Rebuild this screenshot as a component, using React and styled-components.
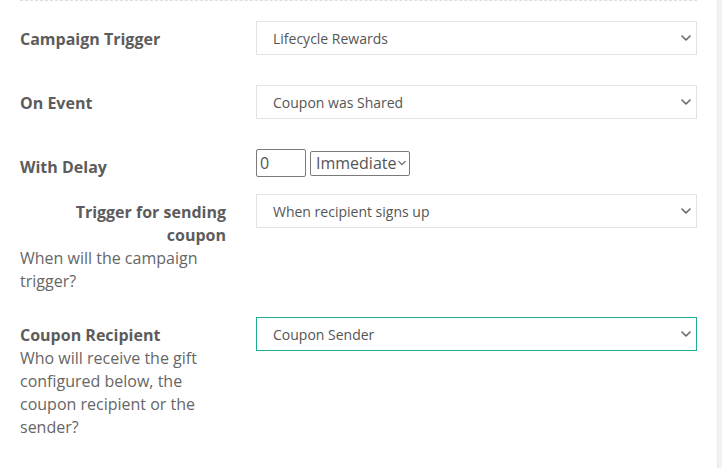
import React from "react";
import styled, { createGlobalStyle } from "styled-components";

const GlobalStyle = createGlobalStyle`
  html, body { margin: 0; padding: 0; background: #fff; }
  body { font-family: "Open Sans", "Liberation Sans", sans-serif; }
  * { box-sizing: border-box; }
`;

const Page = styled.div`
  display: flex;
  width: 722px;
  height: 468px;
  overflow: hidden;
`;

const Main = styled.main`
  flex: 1;
  padding: 0 20px;
`;

const SideStrip = styled.div`
  width: 5px;
  background: #f0f2f7;
  border-left: 1px solid #e9ebf1;
`;

const Form = styled.form`
  display: flex;
  flex-direction: column;
  border-top: 1px dashed #dcdcdc;
  padding-top: 20px;
`;

const Row = styled.div`
  display: grid;
  grid-template-columns: 206px 1fr;
  column-gap: 30px;
  align-items: start;
  margin-bottom: ${(p) => p.$mb}px;
`;

const LabelCell = styled.div`
  padding-top: 7px;
  font-size: 16px;
  line-height: 23px;
  color: #666;
`;

const LabelTitle = styled.label`
  display: block;
  font-weight: 700;
  color: #5c5c5c;
  text-align: ${(p) => p.$align || "left"};
`;

const Description = styled.div`
  font-weight: 400;
  color: #666;
`;

const SelectWrap = styled.div`
  position: relative;
  width: ${(p) => p.$width || "100%"};
  height: ${(p) => p.$height || 34}px;
`;

const Select = styled.select`
  appearance: none;
  -webkit-appearance: none;
  width: 100%;
  height: 100%;
  margin: 0;
  border: 1px solid ${(p) => (p.$active ? "#1fae8d" : "#e2e2e2")};
  border-radius: 0;
  background: #fff;
  padding: 0 30px 0 16px;
  font-family: "Open Sans", "Liberation Sans", sans-serif;
  font-size: 14px;
  color: #555;
  outline: none;
`;

const SmallSelect = styled.select`
  appearance: none;
  -webkit-appearance: none;
  width: 100%;
  height: 100%;
  margin: 0;
  border: 1px solid #7a7a7a;
  border-radius: 2px;
  background: #fff;
  padding: 0 11px 0 5px;
  font-family: "Open Sans", "Liberation Sans", sans-serif;
  font-size: 16px;
  color: #555;
  outline: none;
`;

const Chevron = styled.svg`
  position: absolute;
  right: ${(p) => p.$right}px;
  top: 50%;
  transform: translateY(-50%);
  pointer-events: none;
`;

const DelayControls = styled.div`
  display: flex;
  align-items: center;
  gap: 4px;
`;

const DelayInput = styled.input`
  width: 50px;
  height: 28px;
  margin: 0;
  border: 1px solid #7a7a7a;
  border-radius: 2px;
  padding: 0 3px;
  font-family: "Open Sans", "Liberation Sans", sans-serif;
  font-size: 16px;
  color: #555;
  outline: none;
`;

const ChevronIcon = ({ right = 6, w = 10, h = 6 }) => (
  <Chevron $right={right} width={w} height={h} viewBox="0 0 10 6">
    <path d="M1 1 L5 5 L9 1" fill="none" stroke="#666" strokeWidth="1.6" strokeLinecap="round" strokeLinejoin="round" />
  </Chevron>
);

const FieldSelect = ({ value, active }) => (
  <SelectWrap>
    <Select $active={active} defaultValue={value}>
      <option>{value}</option>
    </Select>
    <ChevronIcon />
  </SelectWrap>
);

export default function App() {
  return (
    <>
      <GlobalStyle />
      <Page>
        <Main>
          <Form>
            <Row $mb={30}>
              <LabelCell>
                <LabelTitle>Campaign Trigger</LabelTitle>
              </LabelCell>
              <FieldSelect value="Lifecycle Rewards" />
            </Row>
            <Row $mb={30}>
              <LabelCell>
                <LabelTitle>On Event</LabelTitle>
              </LabelCell>
              <FieldSelect value="Coupon was Shared" />
            </Row>
            <Row $mb={15}>
              <LabelCell>
                <LabelTitle>With Delay</LabelTitle>
              </LabelCell>
              <DelayControls>
                <DelayInput defaultValue="0" />
                <SelectWrap $width="100px" $height={25}>
                  <SmallSelect defaultValue="Immediate">
                    <option>Immediate</option>
                  </SmallSelect>
                  <ChevronIcon right={4} w={8} h={5} />
                </SelectWrap>
              </DelayControls>
            </Row>
            <Row $mb={24}>
              <LabelCell>
                <LabelTitle $align="right">Trigger for sending coupon</LabelTitle>
                <Description>When will the campaign trigger?</Description>
              </LabelCell>
              <FieldSelect value="When recipient signs up" />
            </Row>
            <Row $mb={0}>
              <LabelCell>
                <LabelTitle>Coupon Recipient</LabelTitle>
                <Description>
                  Who will receive the gift configured below, the coupon recipient or the sender?
                </Description>
              </LabelCell>
              <FieldSelect value="Coupon Sender" active />
            </Row>
          </Form>
        </Main>
        <SideStrip />
      </Page>
    </>
  );
}
